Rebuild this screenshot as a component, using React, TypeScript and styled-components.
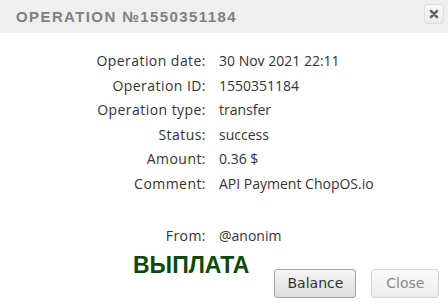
import { createGlobalStyle } from 'styled-components';
import styled from 'styled-components';

const GlobalStyle = createGlobalStyle`
    html, body {
        margin: 0;
        padding: 0;
        background: #ffffff;
    }
`;

const Dialog = styled.div`
    width: 448px;
    height: 304px;
    background: #ffffff;
    font-family: "Open Sans", "Liberation Sans", sans-serif;
    color: #333;
    overflow: hidden;
`;

const Header = styled.div`
    height: 33px;
    background: #efefef;
    display: flex;
    align-items: center;
    justify-content: space-between;
    padding: 0 4px 0 16px;
`;

const Title = styled.div`
    font-family: "Liberation Sans", sans-serif;
    font-size: 15px;
    letter-spacing: 1.4px;
    color: #808080;
    font-weight: bold;
`;

const CloseIcon = styled.button`
    width: 20px;
    height: 20px;
    margin-top: -5px;
    padding: 0;
    border: 1px solid #dedede;
    border-radius: 3px;
    background: linear-gradient(#f7f7f7, #ebebeb);
    display: flex;
    align-items: center;
    justify-content: center;
`;

const Fields = styled.div`
    display: grid;
    grid-template-columns: 206px 1fr;
    column-gap: 13px;
    padding-top: 16px;
`;

const Label = styled.div`
    text-align: right;
    font-size: 14px;
    letter-spacing: 0.45px;
    line-height: 24.5px;
    color: #333;
`;

const Value = styled.div`
    font-size: 14px;
    line-height: 24.5px;
    color: #333;
`;

const Spacer = styled.div`
    grid-column: 1 / 3;
    height: 28px;
`;

const Footer = styled.div`
    display: flex;
    align-items: flex-start;
    padding-left: 133px;
`;

const Stamp = styled.div`
    font-family: "Liberation Sans", sans-serif;
    font-weight: bold;
    font-size: 23px;
    line-height: 28px;
    color: #0b4a0b;
    margin-top: 2px;
    margin-right: 25px;
`;

const Buttons = styled.div`
    display: flex;
    gap: 15px;
    margin-top: 20px;
`;

const Button = styled.button<{ disabled?: boolean }>`
    margin: 0;
    height: 29px;
    padding: 0 ${(p) => (p.disabled ? '14px' : '12px')};
    font-family: "DejaVu Sans", "Liberation Sans", sans-serif;
    font-size: 14px;
    border-radius: 3px;
    border: 1px solid ${(p) => (p.disabled ? '#d4d4d4' : '#a5a5a5')};
    color: ${(p) => (p.disabled ? '#8a8a8a' : '#333')};
    background: ${(p) => (p.disabled ? 'linear-gradient(#fafafa, #ededed)' : 'linear-gradient(#f4f4f4, #dedede)')};
`;

const rows = [
    ['Operation date:', '30 Nov 2021 22:11'],
    ['Operation ID:', '1550351184'],
    ['Operation type:', 'transfer'],
    ['Status:', 'success'],
    ['Amount:', '0.36 $'],
    ['Comment:', 'API Payment ChopOS.io'],
];

export default function App() {
    return (
        <Dialog>
            <GlobalStyle />
            <Header>
                <Title>OPERATION №1550351184</Title>
                <CloseIcon>
                    <svg width="10" height="10" viewBox="0 0 10 10">
                        <path d="M2 2 L8 8 M8 2 L2 8" stroke="#666" strokeWidth="2.6" strokeLinecap="round" />
                    </svg>
                </CloseIcon>
            </Header>
            <Fields>
                {rows.map(([label, value]) => (
                    <>
                        <Label key={label}>{label}</Label>
                        <Value key={label + '-v'}>{value}</Value>
                    </>
                ))}
                <Spacer />
                <Label>From:</Label>
                <Value>@anonim</Value>
            </Fields>
            <Footer>
                <Stamp>ВЫПЛАТА</Stamp>
                <Buttons>
                    <Button>Balance</Button>
                    <Button disabled>Close</Button>
                </Buttons>
            </Footer>
        </Dialog>
    );
}
